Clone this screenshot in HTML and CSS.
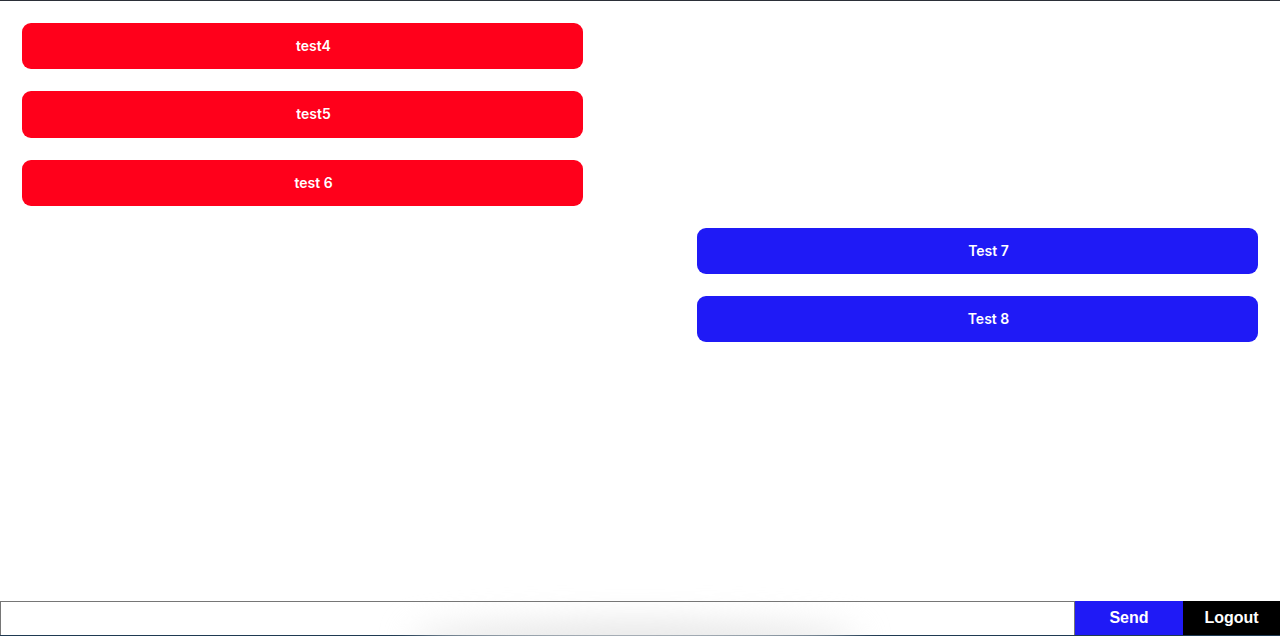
FILE: index.html
```html
<!DOCTYPE html>
<html>
<head>
<meta charset="utf-8">
<link rel="stylesheet" href="styles.css">
</head>
<body>
<div class="app">
  <div class="messages">
    <div class="msg msg-other">test4</div>
    <div class="msg msg-other">test5</div>
    <div class="msg msg-other">test 6</div>
    <div class="msg msg-mine">Test 7</div>
    <div class="msg msg-mine">Test 8</div>
  </div>
  <form class="composer">
    <input class="composer-input" type="text">
    <button class="btn btn-send" type="button">Send</button>
    <button class="btn btn-logout" type="button">Logout</button>
    <div class="glow"></div>
  </form>
</div>
</body>
</html>
```
FILE: styles.css
```css
html, body {
  margin: 0;
  padding: 0;
  background: #ffffff;
}
.app {
  height: 636px;
  box-sizing: border-box;
  border-top: 1px solid #2b2f38;
  display: flex;
  flex-direction: column;
  overflow: hidden;
}
.messages {
  flex: 1;
  padding: 22px;
  display: flex;
  flex-direction: column;
  gap: 22px;
}
.msg {
  width: 561px;
  height: 46.25px;
  flex-shrink: 0;
  box-sizing: border-box;
  padding-left: 22px;
  padding-bottom: 1px;
  border-radius: 9px;
  display: flex;
  align-items: center;
  justify-content: center;
  color: #ffffff;
  font-family: Inter, "Noto Sans", sans-serif;
  font-weight: 600;
  font-size: 14px;
}
.msg-other {
  background: #ff001b;
  align-self: flex-start;
}
.msg-mine {
  background: #1f1af6;
  align-self: flex-end;
}
.composer {
  position: relative;
  margin: 0;
  height: 35px;
  flex-shrink: 0;
  display: flex;
  border-bottom: 1px solid #1f3a52;
  box-sizing: border-box;
}
.composer-input {
  flex: 1;
  margin: 0;
  height: 100%;
  box-sizing: border-box;
  border: 1px solid #767676;
  border-bottom: none;
  background: transparent;
  padding: 0 4px;
  position: relative;
  z-index: 1;
}
.btn {
  margin: 0;
  height: 100%;
  border: none;
  color: #ffffff;
  font-family: "Liberation Sans", Arial, sans-serif;
  font-weight: 700;
  font-size: 16px;
  padding: 0;
  position: relative;
  z-index: 1;
}
.btn-send {
  width: 108px;
  background: #1f1af6;
}
.btn-logout {
  width: 97px;
  background: #000000;
}
.glow {
  position: absolute;
  left: 410px;
  width: 450px;
  bottom: -20px;
  height: 32px;
  border-radius: 50%;
  background: #e4e4e4;
  filter: blur(16px);
  z-index: 0;
  pointer-events: none;
}
```
